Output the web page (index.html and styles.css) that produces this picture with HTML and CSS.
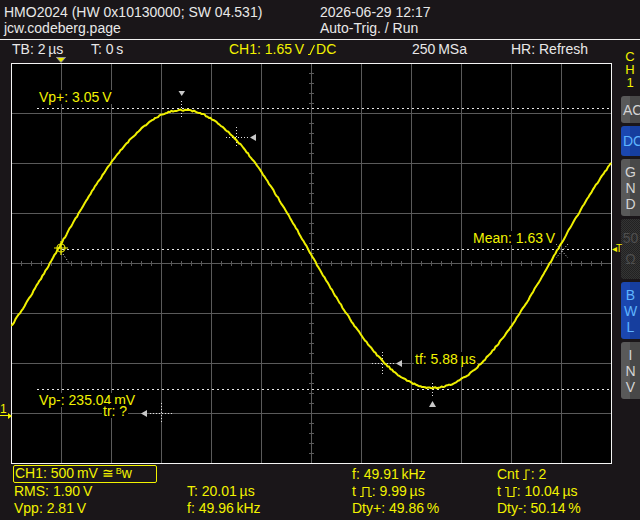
FILE: index.html
```html
<!DOCTYPE html>
<html lang="en">
<head>
    <meta charset="UTF-8">
    <meta name="viewport" content="width=device-width, initial-scale=1.0">
    <title>HMO2024</title>
    <link rel="stylesheet" href="styles.css">
</head>
<body>
<div class="scope">
    <header class="info">
        <div>
            <div>HMO2024 (HW 0x10130000; SW 04.531)</div>
            <div>jcw.codeberg.page</div>
        </div>
        <div>
            <div>2026-06-29 12:17</div>
            <div>Auto-Trig. / Run</div>
        </div>
    </header>

    <div class="deck">
        <div class="main">
            <div class="status">
                <span>TB: 2&#8201;µs</span>
                <span>T: 0&#8201;s</span>
                <span class="yel">CH1: 1.65&#8201;V <svg class="glyph edge" width="7" height="11" viewBox="0 0 7 11"><path d="M0 10.5H2L6.5 1"/></svg>DC</span>
                <span>250&#8201;MSa</span>
                <span>HR: Refresh</span>
            </div>

            <div class="screen">
                <svg class="trig-pos" width="10" height="6" viewBox="0 0 10 6"><path d="M0.5 0.5H9.5L5 5.5Z"/></svg>
                <span class="gnd">1</span>
                <span class="trig-lvl">&#9666;T</span>

                <svg class="plot" width="601" height="401" viewBox="0 0 601 401">
                    <defs>
                        <pattern id="div" width="50" height="50" patternUnits="userSpaceOnUse">
                            <path d="M0.5 0V50M0 0.5H50" stroke="#5a5a5a" fill="none"/>
                        </pattern>
                        <pattern id="tick-x" width="10" height="5" patternUnits="userSpaceOnUse">
                            <path d="M0.5 0V5" stroke="#5a5a5a"/>
                        </pattern>
                        <pattern id="tick-y" width="5" height="10" patternUnits="userSpaceOnUse">
                            <path d="M0 0.5H5" stroke="#5a5a5a"/>
                        </pattern>
                    </defs>
                    <rect width="601" height="401" fill="#000"/>
                    <rect width="601" height="401" fill="url(#div)"/>
                    <rect x="0" y="198" width="601" height="5" fill="url(#tick-x)"/>
                    <rect x="298" y="0" width="5" height="401" fill="url(#tick-y)"/>
                    <rect x="0.5" y="0.5" width="600" height="400" fill="none" stroke="#f4f4f4"/>

                    <!-- Vp+, mean and Vp- levels -->
                    <path d="M26 45.5H600M51 186.5H600M26 326.5H600" stroke="#e8e8e8" stroke-dasharray="2 3" fill="none"/>

                    <!-- measurement cursors -->
                    <path d="M170.5 38V54M215 74.5H237M225.5 64V85M361 300.5H383M371.5 289V311M421.5 320V333M139 350.5H161M150.5 340V361M52 191L58 200M545 181L557 195M557 181L545 195"
                          stroke="#e0e0e0" stroke-dasharray="1 2" fill="none"/>
                    <g fill="#c8c8c8">
                        <polygon points="167.5,28 174,28 170.75,33"/>
                        <polygon points="239,74.5 245,71 245,78"/>
                        <polygon points="385,300.5 391,297 391,304"/>
                        <polygon points="418,344 425,344 421.5,338"/>
                        <polygon points="130,350.5 136,347 136,354"/>
                    </g>

                    <polyline id="trace" fill="none" stroke="#f0f000" stroke-width="2" stroke-linejoin="round"/>
                    <g stroke="#f0f000" fill="none" stroke-width="1.2">
                        <circle cx="50" cy="185" r="4"/>
                        <path d="M43 185H57M50 178V192"/>
                    </g>
                </svg>

                <span class="tag tag-max">Vp+: 3.05&#8201;V</span>
                <span class="tag tag-mean">Mean: 1.63&#8201;V</span>
                <span class="tag tag-min">Vp-: 235.04&#8201;mV</span>
                <span class="tag tag-tr">tr: ?</span>
                <span class="tag tag-tf">tf: 5.88&#8201;µs</span>
            </div>

            <div class="readout">
                <div class="chan">CH1: 500&#8201;mV &#8773;<sup>B</sup>w</div>
                <span>f: 49.91&#8201;kHz</span>
                <span>Cnt <svg class="glyph" width="8" height="11" viewBox="0 0 8 11"><path d="M0 10.5H3V1H7"/></svg>: 2</span>
                <span>RMS: 1.90&#8201;V</span>
                <span>T: 20.01&#8201;µs</span>
                <span>t <svg class="glyph" width="12" height="11" viewBox="0 0 12 11"><path d="M0 10.5H3V1.5H9V10.5H12"/></svg>: 9.99&#8201;µs</span>
                <span>t <svg class="glyph" width="12" height="11" viewBox="0 0 12 11"><path d="M0 1.5H3V10.5H9V1.5H12"/></svg>: 10.04&#8201;µs</span>
                <span>Vpp: 2.81&#8201;V</span>
                <span>f: 49.96&#8201;kHz</span>
                <span>Dty+: 49.86&#8201;%</span>
                <span>Dty-: 50.14&#8201;%</span>
            </div>
        </div>

        <aside class="side">
            <div class="ch-tag"><span>C</span><span>H</span><span>1</span></div>
            <div class="key key-short">AC</div>
            <div class="key key-short key-dc on">DC</div>
            <div class="key key-tall"><span>G</span><span>N</span><span>D</span></div>
            <div class="key key-tall key-ohm off"><span>50</span><span>&#937;</span></div>
            <div class="key key-tall on"><span>B</span><span>W</span><span>L</span></div>
            <div class="key key-tall"><span>I</span><span>N</span><span>V</span></div>
        </aside>
    </div>
</div>
<script src="script.js"></script>
</body>
</html>
```

FILE: styles.css
```css
body {
    margin: 0;
    background-color: #1a1619;
    color: #e8e8e8;
    font-family: "Liberation Sans", Arial, sans-serif;
    font-size: 14px;
}
.scope {
    width: 640px;
    height: 520px;
    overflow: hidden;
}
.info {
    display: grid;
    grid-template-columns: 316px 1fr;
    height: 35px;
    padding: 4px 0 0 4px;
    line-height: 16px;
    border-bottom: 1px solid #f0f0f0;
}
.deck {
    display: grid;
    grid-template-columns: 620px 20px;
}
.yel {
    color: #f2f200;
}
.status {
    display: grid;
    grid-template-columns: 79px 138px 183px 99px 1fr;
    height: 22px;
    padding: 1px 0 0 12px;
    line-height: 16px;
    white-space: nowrap;
}
.glyph {
    fill: none;
    stroke: #f2f200;
    stroke-width: 1.2;
    vertical-align: -1px;
}
.edge {
    margin-right: 1px;
}
.screen {
    position: relative;
    width: 601px;
    height: 401px;
    margin-left: 11px;
}
.plot {
    display: block;
}
.trig-pos {
    position: absolute;
    left: 45px;
    top: -6px;
    fill: #e8e800;
    stroke: #9a9a9a;
    stroke-width: 1;
}
.gnd {
    position: absolute;
    left: -11px;
    top: 341px;
    width: 9px;
    color: #f2f200;
    font-size: 12px;
    line-height: 11px;
    border-bottom: 1px solid #f2f200;
}
.gnd::after {
    content: "";
    position: absolute;
    right: -3px;
    bottom: -4px;
    border-left: 4px solid #f2f200;
    border-top: 3.5px solid transparent;
    border-bottom: 3.5px solid transparent;
}
.trig-lvl {
    position: absolute;
    left: 601px;
    top: 180px;
    color: #f2f200;
    font-size: 10px;
    line-height: 12px;
    letter-spacing: -1px;
}
.tag {
    position: absolute;
    padding: 0 1px;
    background-color: #000;
    color: #f2f200;
    line-height: 14px;
    white-space: nowrap;
}
.tag-max {
    left: 27px;
    top: 27px;
}
.tag-mean {
    left: 461px;
    top: 168px;
}
.tag-min {
    left: 27px;
    top: 330px;
}
.tag-tr {
    left: 91px;
    top: 341px;
}
.tag-tf {
    left: 403px;
    top: 289px;
}
.readout {
    display: grid;
    grid-template-columns: 173px 165px 145px 1fr;
    grid-auto-rows: 17px;
    padding: 2px 0 0 14px;
    color: #f2f200;
    line-height: 17px;
    white-space: nowrap;
}
.chan {
    grid-column: span 2;
    box-sizing: border-box;
    width: 144px;
    height: 18px;
    margin: -1px 0 0 -1px;
    padding-left: 1px;
    border: 1.5px solid #f2f200;
    border-radius: 2px;
    line-height: 15px;
}
.chan sup {
    font-size: 9px;
    line-height: 0;
    vertical-align: 4px;
    margin-left: 2px;
}
.side {
    display: flex;
    flex-direction: column;
    gap: 3px;
    padding-top: 10px;
}
.ch-tag {
    display: flex;
    flex-direction: column;
    align-items: center;
    margin-bottom: 4px;
    color: #f2f200;
    font-size: 13px;
    line-height: 13px;
}
.key {
    display: flex;
    flex-direction: column;
    justify-content: center;
    align-items: center;
    margin-left: 1px;
    overflow: hidden;
    white-space: nowrap;
    border-radius: 3px 0 0 3px;
    background: linear-gradient(90deg, #595959 0 9px, #484848 9px);
    color: #d4d4d4;
}
.key-short {
    height: 27px;
    align-items: flex-start;
    padding-left: 2px;
}
.key-dc {
    height: 30px;
}
.key-tall {
    height: 57px;
    line-height: 16px;
}
.key.on {
    background: linear-gradient(90deg, #1b47b0 0 9px, #163e9e 9px);
    color: #5eb4ff;
}
.key.off {
    background: repeating-conic-gradient(#343434 0 25%, #222 0 50%) 0 0 / 2px 2px;
    color: #4e4e4e;
}
.key-ohm {
    height: 60px;
    line-height: 21px;
}
```

FILE: script.js
```js
// sampled CH1 trace: 500 px per period, 139 px amplitude around the mean line
var trace = document.getElementById('trace');
var seed = 12345;

function noise() {
    seed = (seed * 16807) % 2147483647;
    return seed / 2147483647 - 0.5;
}

var points = [];
for (var x = 0; x <= 601; x += 1.5) {
    var y = 186 - 139 * Math.sin(2 * Math.PI * (x - 47) / 500) + noise() * 1.4;
    points.push(x.toFixed(1) + ',' + y.toFixed(1));
}
trace.setAttribute('points', points.join(' '));
```
